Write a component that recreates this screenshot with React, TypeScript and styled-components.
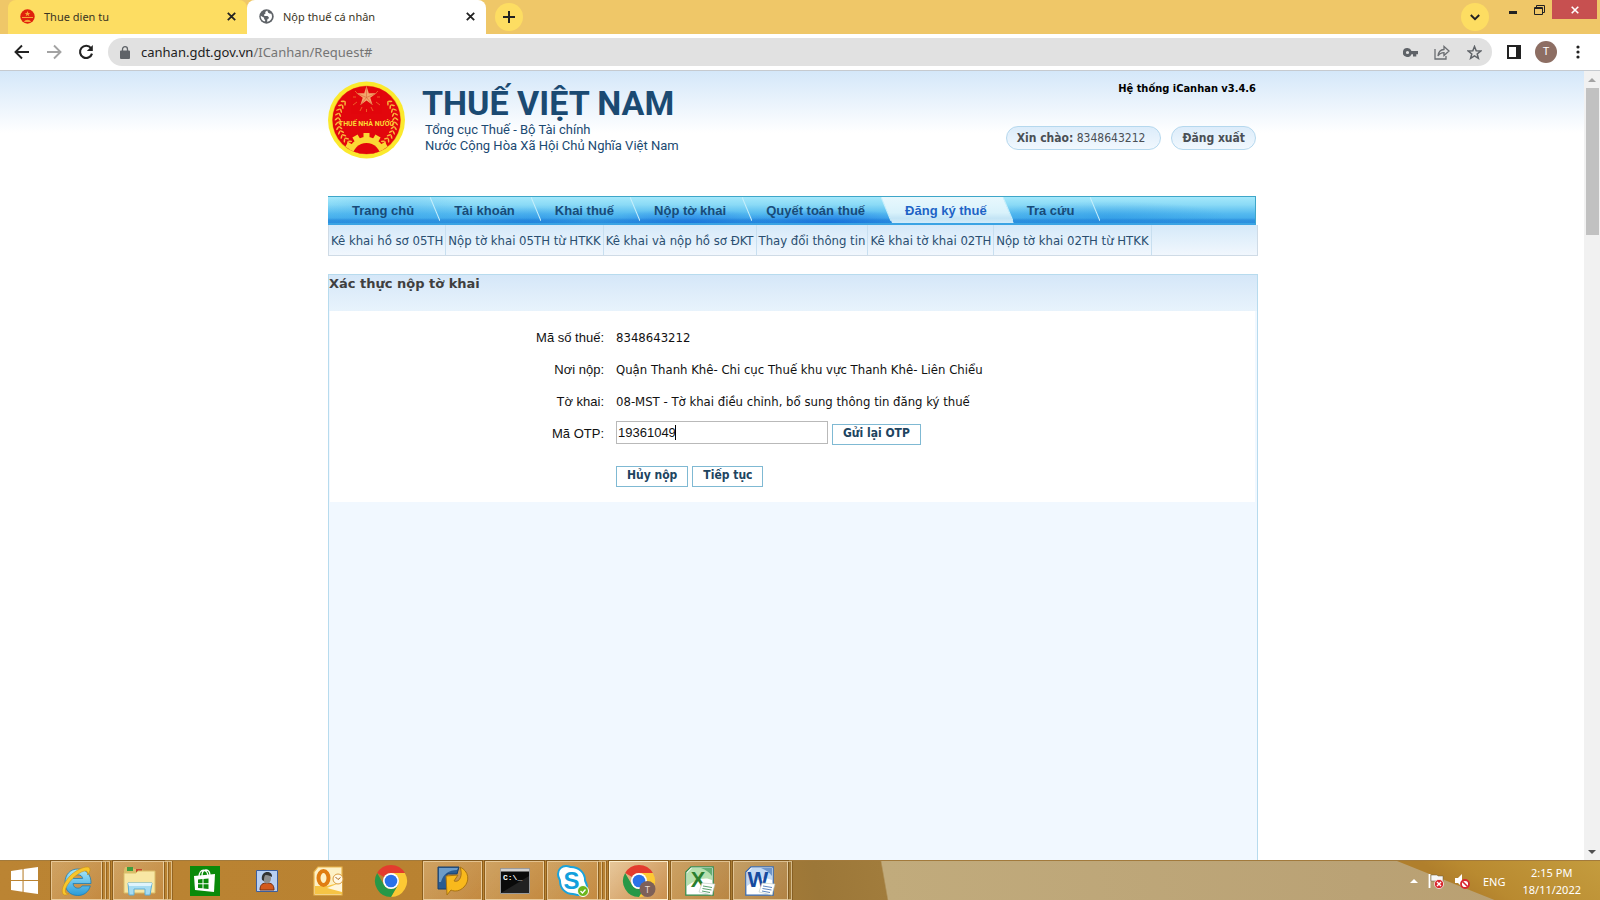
import React, { useState } from "react";
import styled, { createGlobalStyle, css } from "styled-components";

const tahoma = `"DejaVu Sans Condensed", "DejaVu Sans", sans-serif`;
const arial = `"Liberation Sans", Arial, sans-serif`;
const segoe = `"Noto Sans", "Open Sans", sans-serif`;
const roboto = `Roboto, sans-serif`;

const GlobalStyle = createGlobalStyle`
  *, *::before, *::after { box-sizing: border-box; }
  body { margin: 0; font-family: ${tahoma}; font-size: 13px; color: #111; }
  button, input { font: inherit; color: inherit; }
  button { cursor: pointer; padding: 0; border: 0; background: none; }
  a { color: inherit; text-decoration: none; }
  ul, h1, h2, p { margin: 0; padding: 0; list-style: none; }
  svg { display: block; flex: none; }
`;

const Screen = styled.div`
  display: flex;
  flex-direction: column;
  height: 100vh;
  overflow: hidden;
`;

/* ---------- browser frame ---------- */

const TabStrip = styled.div`
  display: flex;
  height: 34px;
  flex: none;
  padding-left: 8px;
  background: #efc768;
  font: 11px ${segoe};
`;

const Tab = styled.div<{ $active?: boolean }>`
  display: flex;
  align-items: center;
  gap: 9px;
  width: 239px;
  padding: 0 9px 2px 12px;
  border-radius: 8px 8px 0 0;
  background: ${(p) => (p.$active ? "#fff" : "#fddd62")};
  color: #3a3423;
`;

const TabTitle = styled.span`
  flex: 1;
`;

const IconButton = styled.button<{ $size?: number }>`
  display: grid;
  place-items: center;
  width: ${(p) => p.$size || 14}px;
  height: ${(p) => p.$size || 14}px;
  flex: none;
  color: #222;
`;

const RoundButton = styled(IconButton)`
  align-self: center;
  border-radius: 50%;
  background: #fddd62;
`;

const NewTabButton = styled(RoundButton)`
  margin-left: 9px;
`;

const WindowControls = styled.div`
  display: flex;
  align-items: flex-start;
  margin-left: auto;
  padding-right: 3px;
`;

const WindowButton = styled.button<{ $close?: boolean }>`
  display: grid;
  place-items: center;
  width: ${(p) => (p.$close ? 45 : 26)}px;
  height: 19px;
  color: ${(p) => (p.$close ? "#fff" : "#222")};
  background: ${(p) => (p.$close ? "#c75050" : "none")};
`;

const WindowButtons = styled.div`
  display: flex;
  margin-left: 11px;
`;

const Toolbar = styled.div`
  display: flex;
  align-items: center;
  height: 37px;
  flex: none;
  padding: 0 11px;
  border-bottom: 1px solid #c6cacf;
  background: #fff;
`;

const NavButtons = styled.div`
  display: flex;
  gap: 10px;
  margin-right: 11px;
`;

const Omnibox = styled.div`
  display: flex;
  align-items: center;
  flex: 1;
  height: 28px;
  padding: 0 7px 0 12px;
  border-radius: 14px;
  background: #e1e1e1;
`;

const Address = styled.div`
  flex: 1;
  margin-left: 11px;
  font: 13px/20px ${segoe};
  color: #222;
  outline: none;
`;

const AddressPath = styled.span`
  color: #757575;
`;

const OmniActions = styled.div`
  display: flex;
  gap: 10px;
`;

const ToolbarActions = styled.div`
  display: flex;
  gap: 10px;
  margin-left: 11px;
`;

const Avatar = styled.button`
  width: 22px;
  height: 22px;
  border-radius: 50%;
  background: #8d6e63;
  color: #fff;
  font: 11px/22px ${roboto};
`;

/* ---------- page ---------- */

const Viewport = styled.div`
  display: flex;
  flex: 1;
  min-height: 0;
`;

const Page = styled.div`
  display: flex;
  flex-direction: column;
  flex: 1;
  overflow: hidden;
  background: linear-gradient(#d4e7f9 0, #fff 62px);
`;

const Container = styled.div`
  display: flex;
  flex-direction: column;
  flex: 1;
  width: 928px;
  max-width: 100%;
  margin: 0 auto;
`;

const Header = styled.header`
  display: flex;
  justify-content: space-between;
  height: 125px;
  flex: none;
`;

const Brand = styled.div`
  display: flex;
  gap: 17px;
  padding-top: 9px;
  color: #1b4a72;
  font: 13px/16px ${roboto};
`;

const BrandText = styled.div`
  padding-top: 4px;
  p { padding-left: 3px; }
`;

const BrandTitle = styled.h1`
  font: bold 34px/38px ${roboto};
`;

const Account = styled.div`
  display: flex;
  flex-direction: column;
  align-items: flex-end;
  gap: 30px;
  padding-top: 10px;
`;

const Version = styled.p`
  font: bold 11px/15px ${tahoma};
  color: #000;
`;

const Pills = styled.div`
  display: flex;
  gap: 10px;
`;

const pill = css`
  height: 24px;
  padding: 0 10px;
  border: 1px solid #b5d8ee;
  border-radius: 12px;
  background: linear-gradient(#dcecfa, #f1f8fe);
  font: 12px/23px ${tahoma};
  color: #4a4f55;
`;

const UserPill = styled.div`
  ${pill}
  padding-right: 15px;
`;

const LogoutLink = styled.a`
  ${pill}
  font-weight: bold;
`;

const MainMenu = styled.ul`
  display: flex;
  height: 29px;
  flex: none;
  border: 1px solid #3ea6c9;
  border-width: 1px 1px 2px 0;
  border-bottom-color: #3aa3e4;
  background:
    linear-gradient(transparent 21px, rgba(15, 105, 205, 0.35) 23px),
    radial-gradient(60px 16px at 200px 26px, rgba(25, 125, 225, 0.45), transparent),
    radial-gradient(90px 14px at 360px 26px, rgba(10, 90, 225, 0.5), transparent),
    radial-gradient(90px 14px at 500px 26px, rgba(10, 90, 225, 0.6), transparent),
    radial-gradient(80px 22px at 70px 14px, rgba(50, 160, 235, 0.35), transparent),
    radial-gradient(120px 16px at 780px 20px, rgba(30, 140, 225, 0.4), transparent),
    linear-gradient(#a5e8fb 0, #8adaf6 30%, #53b9ef 65%, #38a3e8);
`;

const MenuItem = styled.li<{ $active?: boolean }>`
  position: relative;

  &::after {
    content: "";
    position: absolute;
    top: 0;
    right: -10px;
    z-index: 2;
    width: 10px;
    height: 24px;
    background: linear-gradient(to top right, transparent calc(50% - 1px), #c8effb 50%, transparent calc(50% + 1px));
  }

  ${(p) =>
    p.$active &&
    css`
      &::before {
        content: "";
        position: absolute;
        inset: 0 -11px 0 0;
        background: linear-gradient(#e8f8fd 0, #d9f2fb 60%, #c3e4f5 82%, #d2ebfa);
        clip-path: polygon(0 0, calc(100% - 11px) 0, 100% 100%, 11px 100%);
      }
    `}
`;

const MenuLink = styled.a<{ $active?: boolean }>`
  position: relative;
  z-index: 1;
  display: block;
  padding: 0 16px 0 24px;
  font: bold 13px/27px ${arial};
  color: ${(p) => (p.$active ? "#1d63c6" : "#184b78")};
`;

const SubMenu = styled.ul`
  display: flex;
  width: calc(100% + 2px);
  height: 31px;
  flex: none;
  border: 1px solid #cfdbe6;
  border-top: 0;
  background: linear-gradient(#d5e9f9, #f1f7fd);
`;

const SubItem = styled.li`
  padding: 0 2px;
  border-right: 1px solid #c8dff0;
  line-height: 31px;
  white-space: nowrap;
  color: #2a4e70;
`;

const Panel = styled.section`
  flex: 1;
  width: calc(100% + 2px);
  margin-top: 18px;
  border: 1px solid #b7dbee;
  border-bottom: 0;
  background: #f1f8ff;
`;

const PanelTitle = styled.h2`
  height: 36px;
  background: linear-gradient(#d5e7f8, #e8f3fc);
  font: bold 13px/18px "DejaVu Sans", sans-serif;
  color: #3f3f3f;
`;

const Form = styled.form`
  display: grid;
  grid-template-columns: 274px 1fr;
  grid-auto-rows: 32px;
  column-gap: 12px;
  align-items: center;
  height: 191px;
  margin: 0 2px 0 1px;
  padding-top: 10px;
  background: #fff;
`;

const Label = styled.label`
  font-family: ${arial};
  text-align: right;
`;

const Value = styled.output`
  white-space: nowrap;
`;

const OtpRow = styled.div`
  display: flex;
  align-items: flex-end;
  gap: 4px;
`;

const OtpField = styled.div`
  position: relative;
  margin-bottom: 1px;
`;

const OtpInput = styled.input`
  display: block;
  width: 212px;
  height: 23px;
  padding: 0 1px;
  border: 1px solid #b9b9b9;
  background: #fff;
  font-family: ${arial};
  outline: none;
`;

const Caret = styled.i`
  position: absolute;
  top: 4px;
  left: 59px;
  width: 1px;
  height: 15px;
  background: #000;
`;

const FormButton = styled.button`
  height: 21px;
  padding: 0 10px 3px;
  border: 1px solid #7fb9d3;
  background: #fff;
  font: bold 12px/16px ${tahoma};
  color: #20445f;
`;

const Actions = styled.div`
  display: flex;
  gap: 4px;
  grid-column: 2;
  padding-top: 22px;
`;

const Scrollbar = styled.div`
  display: flex;
  flex-direction: column;
  align-items: center;
  gap: 4px;
  width: 16px;
  flex: none;
  padding: 5px 0 4px;
  background: #f1f1f1;
`;

const Thumb = styled.div`
  width: 13px;
  height: 147px;
  margin-bottom: auto;
  background: #c1c1c1;
`;

/* ---------- taskbar ---------- */

const Taskbar = styled.footer`
  position: relative;
  display: flex;
  height: 40px;
  flex: none;
  background: linear-gradient(80deg, #bb8433 0, #b98231 25%, #bb8433 40%, #9c7738 51%, #a17c3c 55.2%, #c1ab7c 55.3%, #baa275 85%, #b99f70);
  box-shadow: inset 0 1px #a27a3c;

  &::before {
    content: "";
    position: absolute;
    inset: 1px 0 0 auto;
    width: 203px;
    background: linear-gradient(35deg, #b07f2c 30%, #b98a30 45%, #c49c3e);
    clip-path: polygon(0 0, 100% 0, 100% 100%, 48% 100%);
  }
`;

const StartButton = styled.button`
  width: 51px;
  padding-left: 11px;
`;

const TaskSlot = styled.div`
  display: flex;
  width: 62px;
  padding-top: 1px;
`;

const TaskButton = styled.button<{ $open?: boolean; $active?: boolean; $stack?: number }>`
  display: grid;
  place-items: center;
  width: ${(p) => 59 - (p.$stack || 0) * 4}px;
  height: 39px;
  ${(p) =>
    p.$open &&
    css`
      border: 1px solid rgba(255, 240, 205, ${p.$active ? 0.95 : 0.55});
      background: linear-gradient(135deg, rgba(255, 235, 210, ${p.$active ? 0.65 : 0.3}), rgba(225, 160, 110, ${p.$active ? 0.45 : 0.25}));
      box-shadow: 0 0 0 1px rgba(110, 70, 15, 0.6);
    `}
`;

const StackEdge = styled.i`
  width: 4px;
  height: 39px;
  border: solid rgba(255, 240, 205, 0.55);
  border-width: 1px 1px 1px 0;
  box-shadow: 1px 0 rgba(110, 70, 15, 0.5);
`;

const Tray = styled.div`
  position: relative;
  display: flex;
  align-items: center;
  margin-left: auto;
  padding: 2px 19px 0 0;
  color: #fff;
  font: 11px/17px ${segoe};
`;

const TrayIcons = styled.div`
  display: flex;
  align-items: center;
  gap: 10px;
  margin-right: 13px;
`;

const Clock = styled.div`
  margin-left: 17px;
  text-align: center;
`;

/* ---------- icons ---------- */

const CloseIcon = ({ s = 9 }: { s?: number }) => (
  <svg width={s} height={s} viewBox="0 0 9 9" stroke="currentColor" strokeWidth="1.8" fill="none">
    <path d="M.8.8l7.4 7.4M8.2.8L.8 8.2" />
  </svg>
);

const leaves = Array.from({ length: 11 }, (_, i) => 132 + i * 9);

const Branch = () => (
  <g fill="#f9b63a">
    {leaves.map((a) => (
      <g key={a} transform={`rotate(${a} 38.5 39)`}>
        <ellipse cx="68.5" cy="37" rx="2.3" ry=".8" transform="rotate(-45 68.5 37)" />
        <ellipse cx="65.5" cy="37" rx="2.3" ry=".8" transform="rotate(-130 65.5 37)" />
      </g>
    ))}
  </g>
);

const Emblem = () => (
  <svg width="77" height="79" viewBox="0 -1 77 79">
    <defs>
      <clipPath id="disc"><circle cx="38.5" cy="39" r="34" /></clipPath>
    </defs>
    <circle cx="38.5" cy="39" r="38.5" fill="#fbe92d" />
    <circle cx="38.5" cy="39" r="34.5" fill="#f3a02a" />
    <circle cx="38.5" cy="39" r="34" fill="#e2060c" />
    <g clipPath="url(#disc)">
      <path d="M27 10l2 2M50 10l-2 2M25 16h3M52 16h-3M25 24l4-3M52 24l-4-3M32 30l2-4M45 30l-2-4M38.5 31v-3" stroke="#f3a63f" strokeWidth=".7" opacity=".8" />
      <path d="M38.5 5l2.3 7.2h7.600l-6.1 4.500 2.300 7.300-6.100-4.500-6.100 4.500 2.300-7.300-6.100-4.500h7.600z" fill="#f4a56b" />
      <path d="M38.5 5v11.500l-6.100 7.500M38.500 16.500l9.900-4.300M38.500 16.500l6.200 7.500M38.500 16.500l-9.900-4.300" stroke="#d9673a" strokeWidth=".6" fill="none" />
      <Branch />
      <g transform="translate(77 0) scale(-1 1)"><Branch /></g>
      <g fill="#fbd935">
        <circle cx="38.5" cy="75" r="19" />
        {[-60, -30, 0, 30, 60].map((a) => (
          <rect key={a} x="35.5" y="52" width="6" height="8" transform={`rotate(${a} 38.5 75)`} />
        ))}
      </g>
      <circle cx="38.5" cy="76" r="14" fill="#e2060c" />
    </g>
    <text x="38.5" y="45" textAnchor="middle" fontFamily="Roboto, sans-serif" fontWeight="bold" fontSize="7" fill="#fbd935">THUẾ NHÀ NƯỚC</text>
  </svg>
);

const Favicon = () => (
  <svg width="15" height="15" viewBox="0 0 15 15">
    <circle cx="7.5" cy="7.5" r="7.2" fill="#e0200c" />
    <path d="M7.5 2l.8 2h2L8.700 5.200l.6 2-1.800-1.200-1.800 1.200.6-2L4.700 4h2zM2 8h11v1H2zM4 13c1-3 6-3 7 0z" fill="#f6a53a" />
  </svg>
);

const GlobeIcon = () => (
  <svg width="15" height="15" viewBox="0 0 15 15">
    <circle cx="7.5" cy="7.5" r="7.2" fill="#5f6368" />
    <path d="M8.200 1.600l-2 1.300.3 1.500-1.400 1 .2 1.500h3.200l1.300 1.300v1.300l-1.300.6-.5 2.700c2.800-.3 5-2.500 5-5.300 0-1-.3-1.900-.7-2.700l-1.700-.2-1.400-.9zM1.700 6.800c-.2 3 1.500 5 4 5.700l.6-1.300-1.200-1.300V8.700z" fill="#fff" />
  </svg>
);

const ArrowIcon = ({ flip }: { flip?: boolean }) => (
  <svg width="16" height="16" viewBox="0 0 16 16" fill="none" stroke={flip ? "#a3a3a3" : "#222"} strokeWidth="1.9">
    <path d={flip ? "M1 8h13M8 1.5L14.5 8 8 14.5" : "M15 8H2M8 1.5L1.5 8 8 14.5"} />
  </svg>
);

const ReloadIcon = () => (
  <svg width="16" height="16" viewBox="0 0 16 16">
    <path d="M13 4.200A6.100 6.100 0 1 0 14 9.600" fill="none" stroke="#222" strokeWidth="2.1" />
    <path d="M14.800 1v6H8.800z" fill="#222" />
  </svg>
);

const ChromeLogo = ({ badge }: { badge?: boolean }) => (
  <svg width="34" height="34" viewBox="0 0 34 34">
    <g transform="translate(1 1)">
      <path d="M2.140 8A16 16 0 0 1 29.860 8L16 8A8 8 0 0 0 9.070 12z" fill="#e33b2e" />
      <path d="M29.860 8A16 16 0 0 1 16 32L22.930 20A8 8 0 0 0 22.930 12L16 8z" fill="#fcc934" />
      <path d="M2.140 8A16 16 0 0 0 16 32L22.930 20A8 8 0 0 1 9.070 20z" fill="#279847" />
      <circle cx="16" cy="16" r="8" fill="#fff" />
      <circle cx="16" cy="16" r="6.3" fill="#2a71e8" />
    </g>
    {badge && (
      <>
        <circle cx="25.5" cy="25" r="8" fill="#7d6058" />
        <text x="25.5" y="28.5" textAnchor="middle" fontFamily="Roboto, sans-serif" fontSize="9" fill="#e8d8d0">T</text>
      </>
    )}
  </svg>
);

const WindowsLogo = () => (
  <svg width="27" height="27" viewBox="0 0 27 27" fill="#fff">
    <path d="M0 4l11.500-1.800V13H0zM12.600 2L27 0v13H12.600zM0 14h11.500v10.700L0 23zM12.600 14H27v13l-14.400-2z" />
  </svg>
);

const IELogo = () => (
  <svg width="32" height="32" viewBox="0 0 32 32">
    <defs><linearGradient id="ie" x2="0" y2="1"><stop stopColor="#a9e8fb" /><stop offset="1" stopColor="#2a9bd8" /></linearGradient></defs>
    <path d="M30 18.500H12c.4 3 2.100 4.700 4.800 4.700 2 0 3.400-.8 4.300-2.300h8.200C27.600 27 23 30.500 16.800 30.500 9 30.500 4 25.300 4 17.500S9.300 4 16.800 4c8.200 0 13.500 5.500 13.200 14.500zM21.700 13.500c-.5-2.400-2.200-3.700-4.800-3.700-2.500 0-4.200 1.300-4.800 3.700z" fill="url(#ie)" stroke="#1d7db5" strokeWidth=".8" />
    <path d="M2.500 29.500C-2 25 6 11 16 5.500 22 2 28.500.5 29 4c.3 2-1 4-2.500 6 .6-3-.2-4.500-3-4C17 7 4.500 19 4.300 26c0 2 1 3 3.700 2.500-2 1.500-4.200 2.200-5.500 1z" fill="#f8c62b" stroke="#c98d10" strokeWidth=".6" />
  </svg>
);

const ExplorerLogo = () => (
  <svg width="34" height="32" viewBox="0 0 34 32">
    <path d="M2 5l1-3h7l2 2h8l1 2h10v22H2z" fill="#d9bd68" />
    <path d="M5 2h6v4H5z" fill="#3f9d3d" /><path d="M14 4h6v3h-6z" fill="#c8442c" /><path d="M22 6h5v2h-5z" fill="#3f83c8" />
    <path d="M2 8h12l2-2h17v22H2z" fill="#f8e7a4" stroke="#d9bd68" />
    <path d="M6 18h24l-2 12h-5v-6H12v6H7z" fill="#a6dcf2" stroke="#5eaed6" />
    <path d="M6 18h24l-1 3H7z" fill="#dff4fc" />
  </svg>
);

const StoreLogo = () => (
  <svg width="30" height="30" viewBox="0 0 30 30">
    <path d="M0 0h30v30H0z" fill="#0a8a0a" />
    <path d="M9 11c0-9 9-9 9 0M12 10c0-8 8-8 8 0" fill="none" stroke="#fff" strokeWidth="1.3" />
    <path d="M4 10l21-2-1 18-19-2z" fill="#fff" />
    <path d="M8 13.500l4.500-.4v4.200H8zM13.500 13l5-.4v4.700h-5zM8 18.300h4.500v4L8 22zM13.500 18.300h5v4.800l-5-.6z" fill="#0a8a0a" />
  </svg>
);

const PersonLogo = () => (
  <svg width="22" height="22" viewBox="0 0 22 22">
    <path d="M.5.500h21v21H.5z" fill="#b9d0f2" stroke="#3d5f9e" />
    <path d="M4 20c0-6 3-7 7-7s7 1 7 7z" fill="#d45a1d" stroke="#7b3010" />
    <ellipse cx="11" cy="8.5" rx="4" ry="5" fill="#8e8e8e" />
    <path d="M6 10C4 0 17 0 16 7c-2-1-3-2-6-2-1 0-2 1-2 6z" fill="#333" />
  </svg>
);

const OutlookLogo = () => (
  <svg width="31" height="30" viewBox="0 0 31 30">
    <path d="M5 1h24v28H1V6z" fill="#fdf1c6" stroke="#eab54c" strokeWidth="1.2" />
    <path d="M2 28V20h12l15-4v12z" fill="#f6c445" /><path d="M14 22l15-6v10z" fill="#fff6dc" />
    <ellipse cx="10.5" cy="12" rx="5" ry="7" fill="none" stroke="#e07d12" strokeWidth="4" />
    <circle cx="25" cy="13" r="5" fill="#fff8e6" stroke="#d89a3c" />
    <path d="M22.500 11l2.500 2.500 2.500-2" fill="none" stroke="#a8641a" />
  </svg>
);

const ArrowAppLogo = () => (
  <svg width="32" height="30" viewBox="0 0 32 30">
    <path d="M1 1h21l-2 7H10v15H1z" fill="#2a5c92" stroke="#1b3f68" />
    <path d="M2 2h19l-1 2C12 4 6 8 4 16H2z" fill="#6d9cc8" />
    <path d="M23 1c9 4 10 14 4 20-4 4-9 5-13 3l-4 5-1-19 12-1-4 6c6 2 9-6 6-14z" fill="#f9b91c" stroke="#a97412" />
  </svg>
);

const ConsoleLogo = () => (
  <svg width="30" height="26" viewBox="0 0 30 26">
    <path d="M.5.500h29v25H.5z" fill="#0a0a0a" stroke="#9a9a9a" />
    <path d="M1 1h28v2.500H1z" fill="#cfcfcf" /><path d="M1 25L29 8v17z" fill="#222" />
    <text x="3" y="12" fontFamily="'Liberation Mono', monospace" fontSize="8" fontWeight="bold" fill="#fff">C:\_</text>
  </svg>
);

const SkypeLogo = () => (
  <svg width="32" height="32" viewBox="0 0 32 32">
    <path d="M9 1c3 0 4 1 5 1 8 0 14 6 14 13 0 2 2 3 2 7 0 5-4 8-8 8-3 0-4-1-6-1C8 29 3 23 3 16c0-2-2-3-2-7 0-5 4-8 8-8z" fill="#fff" stroke="#19a3dc" strokeWidth="2" />
    <text x="14.5" y="24" textAnchor="middle" fontFamily="'Liberation Sans', sans-serif" fontWeight="bold" fontSize="24" fill="#12a0dc">S</text>
    <circle cx="26" cy="26" r="5.5" fill="#6bb61c" stroke="#fff" />
    <path d="M23.500 26l2 2 3-3.500" stroke="#fff" fill="none" strokeWidth="1.3" />
  </svg>
);

const OfficeLogo = ({ letter, color, edge, tint }: { letter: string; color: string; edge: string; tint: string }) => (
  <svg width="32" height="30" viewBox="0 0 32 30">
    <path d="M6 .8h22.200v28.400H.8V6z" fill="#fff" stroke={edge} strokeWidth="1.2" />
    <path d="M7 2h20v12C20 10 10 14 2 20V7z" fill={tint} />
    <path d="M16 2h11v8c-3-4-6-6-11-8z" fill={edge} opacity=".6" />
    <text x="13" y="21" textAnchor="middle" fontFamily="'Liberation Sans', sans-serif" fontWeight="bold" fontSize="22" fill={color}>{letter}</text>
    <path d="M17 17l13 1-3 11-13-3z" fill="#fff" stroke="#b9c6bd" strokeWidth=".6" />
    <path d="M18 20l9 1.500M17.500 22.500l9 1.500M17 25l8 1.500" stroke={edge} strokeWidth=".8" />
  </svg>
);

const Triangle = ({ down, color }: { down?: boolean; color: string }) => (
  <svg width="8" height="8" viewBox="0 0 8 8" fill={color}>
    <path d={down ? "M0 2h8L4 6z" : "M0 6h8L4 2z"} />
  </svg>
);

/* ---------- data ---------- */

const menu = ["Trang chủ", "Tài khoản", "Khai thuế", "Nộp tờ khai", "Quyết toán thuế", "Đăng ký thuế", "Tra cứu"];
const activeMenu = "Đăng ký thuế";

const subMenu = [
  "Kê khai hồ sơ 05TH",
  "Nộp tờ khai 05TH từ HTKK",
  "Kê khai và nộp hồ sơ ĐKT",
  "Thay đổi thông tin",
  "Kê khai tờ khai 02TH",
  "Nộp tờ khai 02TH từ HTKK",
];

const details = [
  { id: "taxcode", label: "Mã số thuế:", value: "8348643212" },
  { id: "office", label: "Nơi nộp:", value: "Quận Thanh Khê- Chi cục Thuế khu vực Thanh Khê- Liên Chiểu" },
  { id: "form", label: "Tờ khai:", value: "08-MST - Tờ khai điều chỉnh, bổ sung thông tin đăng ký thuế" },
];

const apps = [
  { name: "Internet Explorer", icon: <IELogo />, open: true, stack: 2 },
  { name: "File Explorer", icon: <ExplorerLogo />, open: true, stack: 2 },
  { name: "Store", icon: <StoreLogo /> },
  { name: "Contacts", icon: <PersonLogo /> },
  { name: "Outlook", icon: <OutlookLogo /> },
  { name: "Chrome", icon: <ChromeLogo /> },
  { name: "Editor", icon: <ArrowAppLogo />, open: true },
  { name: "Command Prompt", icon: <ConsoleLogo />, open: true },
  { name: "Skype", icon: <SkypeLogo />, open: true, stack: 2 },
  { name: "Chrome window", icon: <ChromeLogo badge />, open: true, active: true },
  { name: "Excel", icon: <OfficeLogo letter="X" color="#2a7f2f" edge="#2f8a4b" tint="#b7e0b0" />, open: true },
  { name: "Word", icon: <OfficeLogo letter="W" color="#164a9e" edge="#3568b0" tint="#c3d9f3" />, open: true, stack: 1 },
];

export default function App() {
  const [otp, setOtp] = useState("19361049");
  return (
    <Screen>
      <GlobalStyle />
      <TabStrip>
        <Tab>
          <Favicon />
          <TabTitle>Thue dien tu</TabTitle>
          <IconButton aria-label="Close tab" $size={13}><CloseIcon /></IconButton>
        </Tab>
        <Tab $active>
          <GlobeIcon />
          <TabTitle>Nộp thuế cá nhân</TabTitle>
          <IconButton aria-label="Close tab" $size={13}><CloseIcon /></IconButton>
        </Tab>
        <NewTabButton aria-label="New tab" $size={28}>
          <svg width="12" height="12" viewBox="0 0 12 12" stroke="#222" strokeWidth="2"><path d="M6 0v12M0 6h12" /></svg>
        </NewTabButton>
        <WindowControls>
          <RoundButton aria-label="Search tabs" $size={28}>
            <svg width="10" height="7" viewBox="0 0 10 7" fill="none" stroke="#222" strokeWidth="1.9"><path d="M.8 1L5 5.200 9.200 1" /></svg>
          </RoundButton>
          <WindowButtons>
            <WindowButton aria-label="Minimize">
              <svg width="8" height="8" viewBox="0 0 8 8"><path d="M0 5h8v3H0z" fill="#222" /></svg>
            </WindowButton>
            <WindowButton aria-label="Restore">
              <svg width="11" height="10" viewBox="0 0 11 10" fill="none" stroke="#222"><path d="M2.500 2V.5h8v7H9" /><path d="M.5 2.500h8v7h-8zM.5 3.500h8" /></svg>
            </WindowButton>
            <WindowButton $close aria-label="Close"><CloseIcon s={8} /></WindowButton>
          </WindowButtons>
        </WindowControls>
      </TabStrip>

      <Toolbar>
        <NavButtons>
          <IconButton aria-label="Back" $size={22}><ArrowIcon /></IconButton>
          <IconButton aria-label="Forward" $size={22}><ArrowIcon flip /></IconButton>
          <IconButton aria-label="Reload" $size={22}><ReloadIcon /></IconButton>
        </NavButtons>
        <Omnibox>
          <svg width="10" height="13" viewBox="0 0 10 13"><path d="M1 4.500h8a1 1 0 0 1 1 1V12a1 1 0 0 1-1 1H1a1 1 0 0 1-1-1V5.500a1 1 0 0 1 1-1z" fill="#5f6368" /><path d="M2.500 5.500V3.200a2.500 2.500 0 0 1 5 0v2.300" fill="none" stroke="#5f6368" strokeWidth="1.3" /></svg>
          <Address role="textbox" aria-label="Address" tabIndex={0}>canhan.gdt.gov.vn<AddressPath>/ICanhan/Request#</AddressPath></Address>
          <OmniActions>
            <IconButton aria-label="Passwords" $size={22}>
              <svg width="15" height="9" viewBox="0 0 15 9"><path d="M4.500 0a4.500 4.500 0 1 0 4 6.200H10v2.300h3.300V6.200H15V2.900H8.500A4.500 4.500 0 0 0 4.500 0zm0 2.900a1.600 1.600 0 1 1 0 3.200 1.600 1.600 0 0 1 0-3.200z" fill="#5f6368" /></svg>
            </IconButton>
            <IconButton aria-label="Share" $size={22}>
              <svg width="16" height="15" viewBox="0 0 16 15" fill="none" stroke="#6a6d71" strokeWidth="1.3"><path d="M1 4v10h11v-3" /><path d="M4 11c.4-4 2.500-6.300 6-6.500V1.500L15 6l-5 4.500V7.700C7.500 7.700 5.500 8.500 4 11z" /></svg>
            </IconButton>
            <IconButton aria-label="Bookmark" $size={22}>
              <svg width="15" height="15" viewBox="0 0 15 15" fill="none" stroke="#5f6368" strokeWidth="1.5"><path d="M7.500 1.500l1.700 4.200 4.500.3-3.500 2.900 1.200 4.400-3.900-2.400-3.900 2.400 1.200-4.400L1.300 6l4.500-.3z" /></svg>
            </IconButton>
          </OmniActions>
        </Omnibox>
        <ToolbarActions>
          <IconButton aria-label="Side panel" $size={22}>
            <svg width="14" height="14" viewBox="0 0 14 14"><path d="M0 0h14v14H0z" fill="#222" /><path d="M2 2h7v10H2z" fill="#fff" /></svg>
          </IconButton>
          <Avatar aria-label="Profile">T</Avatar>
          <IconButton aria-label="Menu" $size={22}>
            <svg width="4" height="14" viewBox="0 0 4 14" fill="#222"><circle cx="2" cy="2" r="1.6" /><circle cx="2" cy="7" r="1.6" /><circle cx="2" cy="12" r="1.6" /></svg>
          </IconButton>
        </ToolbarActions>
      </Toolbar>

      <Viewport>
        <Page>
          <Container>
            <Header>
              <Brand>
                <Emblem />
                <BrandText>
                  <BrandTitle>THUẾ VIỆT NAM</BrandTitle>
                  <p>Tổng cục Thuế - Bộ Tài chính</p>
                  <p>Nước Cộng Hòa Xã Hội Chủ Nghĩa Việt Nam</p>
                </BrandText>
              </Brand>
              <Account>
                <Version>Hệ thống iCanhan v3.4.6</Version>
                <Pills>
                  <UserPill><b>Xin chào:</b> 8348643212</UserPill>
                  <LogoutLink href="#">Đăng xuất</LogoutLink>
                </Pills>
              </Account>
            </Header>

            <MainMenu>
              {menu.map((m) => (
                <MenuItem key={m} $active={m === activeMenu}>
                  <MenuLink href="#" $active={m === activeMenu}>{m}</MenuLink>
                </MenuItem>
              ))}
            </MainMenu>
            <SubMenu>
              {subMenu.map((m) => (
                <SubItem key={m}><a href="#">{m}</a></SubItem>
              ))}
            </SubMenu>

            <Panel>
              <PanelTitle>Xác thực nộp tờ khai</PanelTitle>
              <Form onSubmit={(e) => e.preventDefault()}>
                {details.map((d) => (
                  <React.Fragment key={d.id}>
                    <Label htmlFor={d.id}>{d.label}</Label>
                    <Value id={d.id}>{d.value}</Value>
                  </React.Fragment>
                ))}
                <Label htmlFor="otp">Mã OTP:</Label>
                <OtpRow>
                  <OtpField>
                    <OtpInput id="otp" value={otp} onChange={(e) => setOtp(e.target.value)} />
                    <Caret />
                  </OtpField>
                  <FormButton type="button">Gửi lại OTP</FormButton>
                </OtpRow>
                <Actions>
                  <FormButton type="button">Hủy nộp</FormButton>
                  <FormButton type="submit">Tiếp tục</FormButton>
                </Actions>
              </Form>
            </Panel>
          </Container>
        </Page>
        <Scrollbar>
          <Triangle color="#a3a3a3" />
          <Thumb />
          <Triangle down color="#505050" />
        </Scrollbar>
      </Viewport>

      <Taskbar>
        <StartButton aria-label="Start"><WindowsLogo /></StartButton>
        {apps.map((a) => (
          <TaskSlot key={a.name}>
            <TaskButton aria-label={a.name} $open={a.open} $active={a.active} $stack={a.stack}>{a.icon}</TaskButton>
            {Array.from({ length: a.stack || 0 }, (_, i) => <StackEdge key={i} />)}
          </TaskSlot>
        ))}
        <Tray>
          <TrayIcons>
            <Triangle color="#fff" />
            <svg width="16" height="16" viewBox="0 0 16 16">
              <path d="M1.500 1v14" stroke="#fff" strokeWidth="1.8" /><path d="M3 2h6l1 1h5v6H9L8 8H3z" fill="#f6f6f6" stroke="#6b5a3a" strokeWidth=".5" />
              <circle cx="11" cy="11" r="4.6" fill="#d8262c" stroke="#fff" strokeWidth=".7" /><path d="M9 9l4 4M13 9l-4 4" stroke="#fff" strokeWidth="1.4" />
            </svg>
            <svg width="16" height="16" viewBox="0 0 16 16">
              <path d="M1 5h3l4-4v13l-4-4H1z" fill="#fff" /><circle cx="11" cy="11" r="4" fill="#fff" stroke="#d8262c" strokeWidth="1.8" /><path d="M8.500 8.500l5 5" stroke="#d8262c" strokeWidth="1.6" />
            </svg>
          </TrayIcons>
          ENG
          <Clock>2:15 PM<br />18/11/2022</Clock>
        </Tray>
      </Taskbar>
    </Screen>
  );
}
